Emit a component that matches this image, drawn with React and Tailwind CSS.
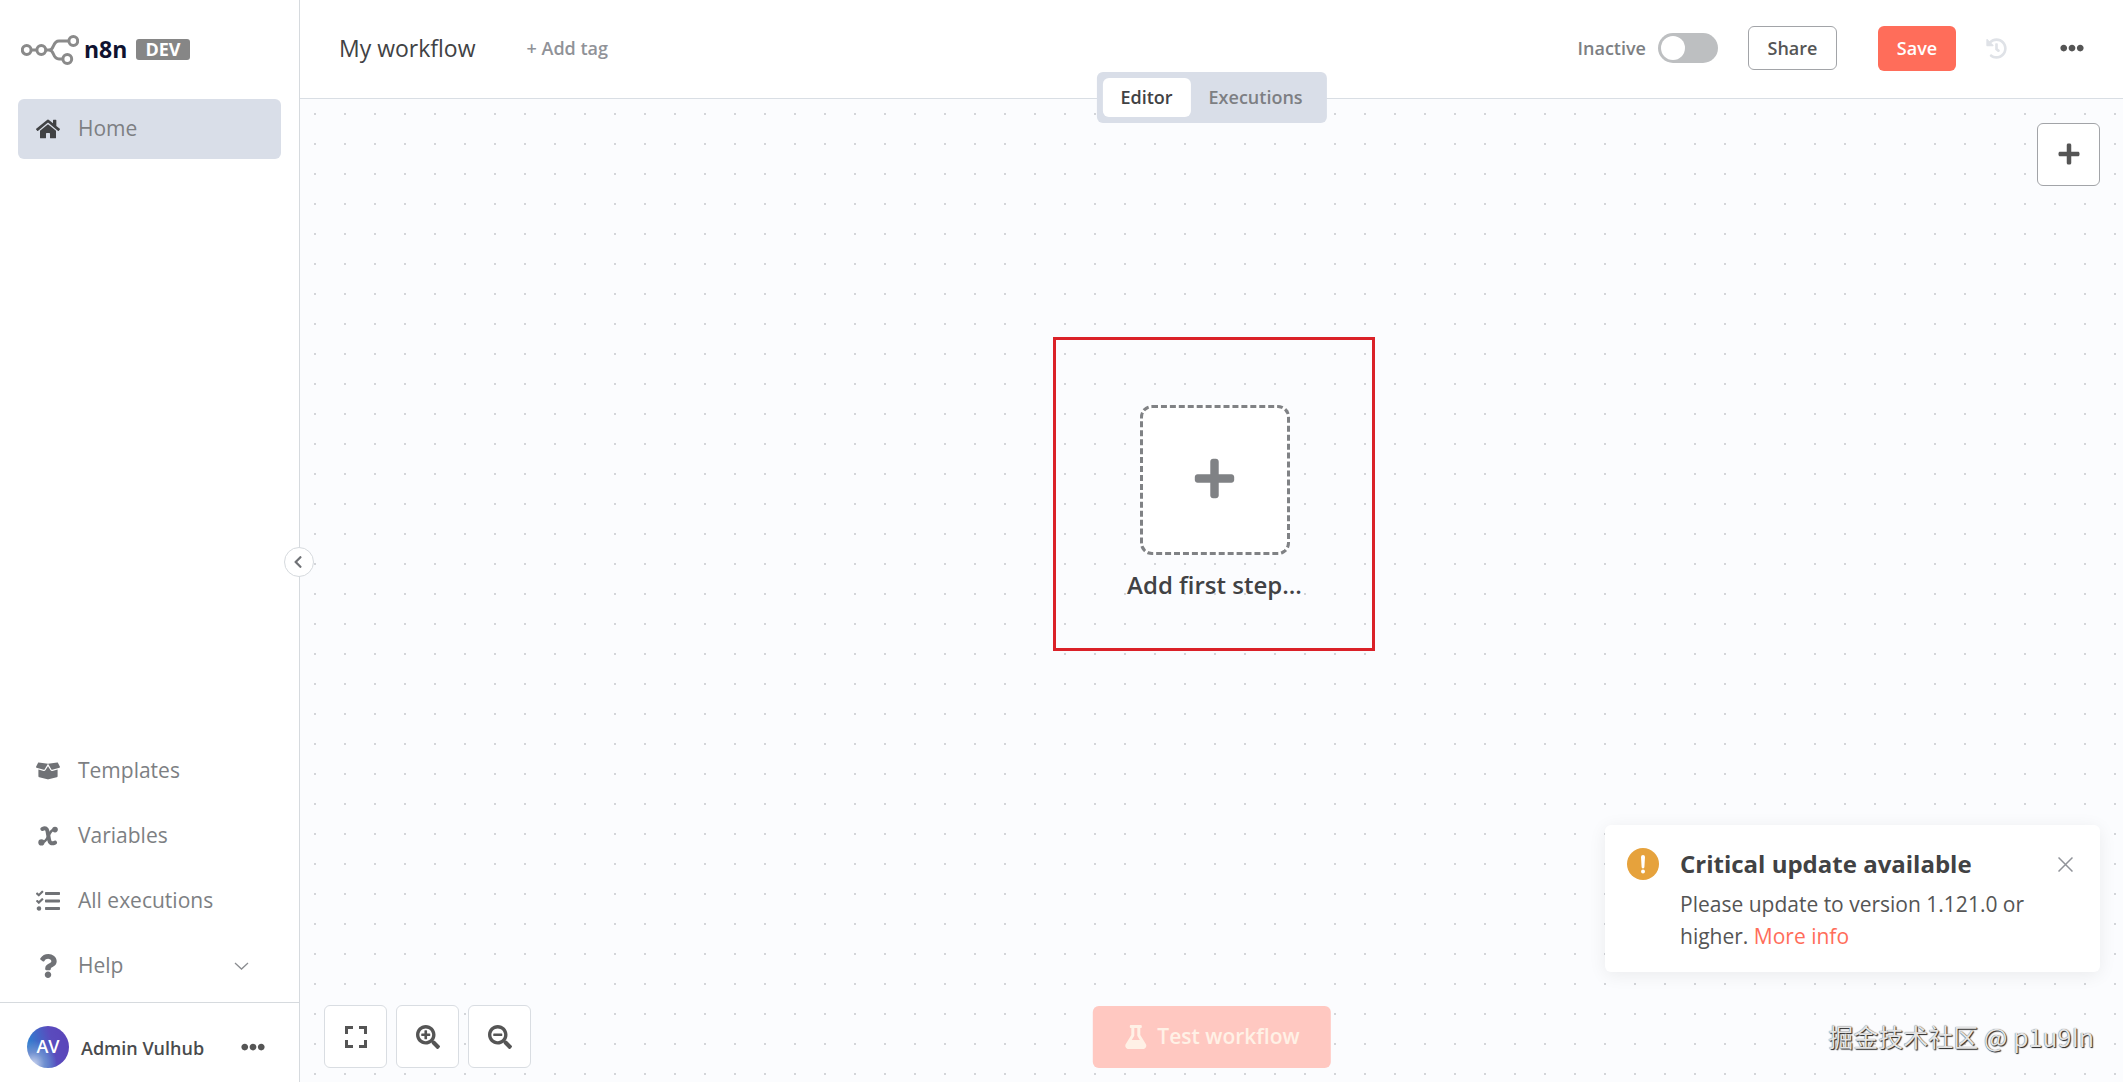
import React from "react";
import {
  FaHome,
  FaBoxOpen,
  FaTasks,
  FaQuestion,
  FaHistory,
  FaEllipsisH,
  FaPlus,
  FaSearchPlus,
  FaSearchMinus,
  FaFlask,
  FaChevronLeft,
} from "react-icons/fa";

function VariableIcon({ className }) {
  return (
    <svg className={className} viewBox="0 0 20 20" fill="none" stroke="currentColor" strokeLinecap="round" aria-hidden="true">
      <path d="M4.4 3C7.4 1.4 9 2.4 9.6 5.6L11 13.4C11.6 17 13.4 18.2 17 16.6" strokeWidth="4" />
      <path d="M17 3.6C13.6 3.2 12.4 6 10.4 10C8.6 13.8 7 16.6 3.6 16.4" strokeWidth="2.4" />
      <circle cx="17" cy="3.6" r="2.8" fill="currentColor" stroke="none" />
      <circle cx="3.4" cy="16.4" r="3.1" fill="currentColor" stroke="none" />
    </svg>
  );
}

function FitIcon({ className }) {
  return (
    <svg className={className} viewBox="0 0 22 22" fill="none" stroke="currentColor" strokeWidth="3" aria-hidden="true">
      <path d="M1.5 8V1.5H8M14 1.5H20.5V8M20.5 14V20.5H14M8 20.5H1.5V14" />
    </svg>
  );
}

function LogoMark() {
  return (
    <svg className="h-[30px] w-[58px]" viewBox="0 0 58 30" fill="none" stroke="#8a8a8a" strokeWidth="3" aria-hidden="true">
      <circle cx="5.7" cy="15" r="4.4" />
      <circle cx="20.3" cy="15" r="4.4" />
      <circle cx="52.3" cy="6" r="4.4" />
      <circle cx="46.3" cy="24" r="4.4" />
      <path d="M10 15H16M25 15H28C34 15 31 6 38 6H48M28 15C34 15 31 24 38 24H42" />
    </svg>
  );
}

function MenuItem({ icon, label, children }) {
  return (
    <a href="#" className="flex h-[60px] items-center rounded-md px-[18px] text-[21px] text-[#7d7f83]">
      <span className="mr-[18px] flex w-6 justify-center text-[#707276]">{icon}</span>
      <span className="flex-1">{label}</span>
      {children}
    </a>
  );
}

function Sidebar() {
  return (
    <aside className="flex w-[300px] shrink-0 flex-col border-r border-[#d6dade] bg-white">
      <div className="flex h-[99px] items-center gap-[5px] pl-[21px]">
        <LogoMark />
        <span className="pb-px text-[23px] font-bold text-[#101330]">n8n</span>
        <span className="ml-1 rounded-[3px] bg-[#868686] px-[9px] text-[18px] leading-[21px] font-bold text-white">DEV</span>
      </div>
      <nav className="flex flex-1 flex-col px-[18px]">
        <a href="#" className="flex h-[60px] items-center rounded-md bg-[#d9dee8] px-[18px] text-[21px] text-[#7d7f83]">
          <span className="mr-[18px] flex w-6 justify-center text-[#414244]"><FaHome className="size-6" /></span>
          Home
        </a>
        <div className="mt-auto mb-[6px] flex flex-col gap-[5px]">
          <MenuItem icon={<FaBoxOpen className="size-6" />} label="Templates" />
          <MenuItem icon={<VariableIcon className="size-5" />} label="Variables" />
          <MenuItem icon={<FaTasks className="size-6" />} label="All executions" />
          <MenuItem icon={<FaQuestion className="size-6" />} label="Help">
            <svg className="mr-[14px] h-2 w-[15px]" viewBox="0 0 15 8" fill="none" stroke="#8b8d91" strokeWidth="1.3" aria-hidden="true">
              <path d="M1 1L7.5 7L14 1" />
            </svg>
          </MenuItem>
        </div>
      </nav>
      <div className="flex h-20 items-center border-t border-[#d6dade] pr-[34px] pb-1 pl-[27px] pt-3">
        <span className="flex size-[42px] items-center justify-center rounded-full bg-[radial-gradient(circle_at_15%_90%,#c9d3ee_0%,#6f8fd0_22%,transparent_45%),linear-gradient(75deg,#2f7fd0_15%,#5a4bbd_60%,#5a43b8_100%)] text-[18px] font-semibold text-white">AV</span>
        <span className="ml-3 flex-1 pt-[3px] text-[18px] font-semibold text-[#4a4b4d]">Admin Vulhub</span>
        <button type="button" aria-label="User menu" className="text-[#555]"><FaEllipsisH className="size-6" /></button>
      </div>
    </aside>
  );
}

function Header() {
  return (
    <header className="relative flex h-[99px] shrink-0 items-center border-b border-[#d9dee4] bg-white pr-[39px] pb-[2px] pl-[39px]">
      <h1 className="text-[23px] text-[#414244]">My workflow</h1>
      <button type="button" className="ml-[51px] text-[18px] font-semibold text-[#909298]">+ Add tag</button>
      <div className="ml-auto flex items-center">
        <label htmlFor="active" className="text-[18px] font-semibold text-[#7d7f83]">Inactive</label>
        <input
          id="active"
          type="checkbox"
          role="switch"
          className="ml-3 h-[30px] w-[60px] appearance-none rounded-full bg-[#bdbfc1] before:mt-[3px] before:ml-[3px] before:block before:size-6 before:rounded-full before:bg-white"
        />
        <button type="button" className="ml-[30px] h-11 w-[89px] rounded-md border border-[#a2a4a8] bg-white text-[18px] font-semibold text-[#555]">Share</button>
        <button type="button" className="ml-[41px] h-[45px] w-[78px] rounded-md bg-[#ff6d5a] text-[18px] font-semibold text-white">Save</button>
        <button type="button" aria-label="Workflow history" disabled className="ml-[30px] text-[#dfe2e7]"><FaHistory className="size-[21px]" /></button>
        <button type="button" aria-label="More actions" className="ml-[53px] text-[#555]"><FaEllipsisH className="size-6" /></button>
      </div>
      <div role="tablist" className="absolute top-[72px] left-1/2 z-10 flex -translate-x-1/2 rounded-md bg-[#d9dee8] p-[6px] text-[18px] font-semibold">
        <button type="button" role="tab" aria-selected="true" className="h-[39px] rounded-md bg-white px-[18px] text-[#414244]">Editor</button>
        <button type="button" role="tab" aria-selected="false" className="h-[39px] px-[18px] text-[#7d7f83]">Executions</button>
      </div>
    </header>
  );
}

function ControlButton({ label, children }) {
  return (
    <button type="button" aria-label={label} className="flex size-[63px] items-center justify-center rounded-md border border-[#d9dde2] bg-white text-[#555]">
      {children}
    </button>
  );
}

function Toast() {
  return (
    <section role="alert" className="absolute right-[23px] bottom-[110px] flex w-[495px] rounded-md bg-white pt-[23px] pr-[27px] pb-5 pl-[22px] shadow-[0_3px_18px_rgba(0,0,0,0.07)]">
      <svg className="size-8 shrink-0" viewBox="0 0 32 32" aria-hidden="true">
        <circle cx="16" cy="16" r="16" fill="#e6a23c" />
        <path d="M14 9a2 2 0 0 1 4 0l-.6 10a1.4 1.4 0 0 1-2.8 0z" fill="#fff" />
        <circle cx="16" cy="23.6" r="2" fill="#fff" />
      </svg>
      <div className="ml-[21px] flex-1">
        <h2 className="text-[24px] leading-8 font-bold text-[#414244]">Critical update available</h2>
        <p className="mt-2 text-[21px] leading-8 text-[#555]">
          Please update to version 1.121.0 or higher. <a href="#" className="text-[#ff6d5a]">More info</a>
        </p>
      </div>
      <button type="button" aria-label="Close" className="absolute top-8 right-[27px]">
        <svg className="size-[15px]" viewBox="0 0 15 15" stroke="#909399" strokeWidth="1.5" aria-hidden="true">
          <path d="M.5 .5L14.5 14.5M14.5 .5L.5 14.5" />
        </svg>
      </button>
    </section>
  );
}

function Canvas() {
  return (
    <main className="relative flex-1 bg-[#fbfcfe] bg-[radial-gradient(circle,#d3d5d9_1px,transparent_1.5px)] bg-[size:30px_30px]">
      <button type="button" aria-label="Add node" className="absolute top-6 right-[23px] flex size-[63px] items-center justify-center rounded-md border border-[#a2a4a8] bg-white pb-[2px] text-[#555]">
        <FaPlus className="size-6" />
      </button>

      <div className="absolute top-[238px] left-1/2 ml-[-159px] flex h-[314px] w-[322px] flex-col items-center border-3 border-[#da2128] pt-[65px] pl-[2px]">
        <button type="button" aria-label="Add first step" className="flex size-[150px] items-center justify-center rounded-xl border-3 border-dashed border-[#808285] bg-white pb-[3px] text-[#808285]">
          <FaPlus className="size-[45px]" />
        </button>
        <span className="mt-3 text-[24px] font-semibold text-[#414244]">Add first step...</span>
      </div>

      <div className="absolute bottom-[14px] left-6 flex gap-[9px]">
        <ControlButton label="Zoom to fit"><FitIcon className="size-[22px]" /></ControlButton>
        <ControlButton label="Zoom in"><FaSearchPlus className="size-6" /></ControlButton>
        <ControlButton label="Zoom out"><FaSearchMinus className="size-6" /></ControlButton>
      </div>

      <button type="button" disabled className="absolute bottom-[14px] left-1/2 flex h-[62px] -translate-x-1/2 items-center gap-[10px] rounded-md bg-[#ffc8c1] px-[31px] text-[21px] font-semibold whitespace-nowrap text-[#fff1e6]">
        <FaFlask className="size-6" />
        Test workflow
      </button>

      <Toast />

      <p className="absolute right-[29px] bottom-[27px] font-['Noto_Sans_CJK_SC',sans-serif] text-[25px] whitespace-nowrap text-[#e4e4e4] [text-shadow:1px_1px_1px_#222,0_0_1px_#555]">掘金技术社区 @ p1u9In</p>
    </main>
  );
}

export default function App() {
  return (
    <div className="relative flex h-screen bg-white font-['Open_Sans',sans-serif]">
      <Sidebar />
      <div className="flex min-w-0 flex-1 flex-col">
        <Header />
        <Canvas />
      </div>
      <button type="button" aria-label="Collapse sidebar" className="absolute top-[547px] left-[284px] flex size-[30px] items-center justify-center rounded-full border border-[#d6dade] bg-white pr-[3px] text-[#707276]">
        <FaChevronLeft className="size-[14px]" />
      </button>
    </div>
  );
}
